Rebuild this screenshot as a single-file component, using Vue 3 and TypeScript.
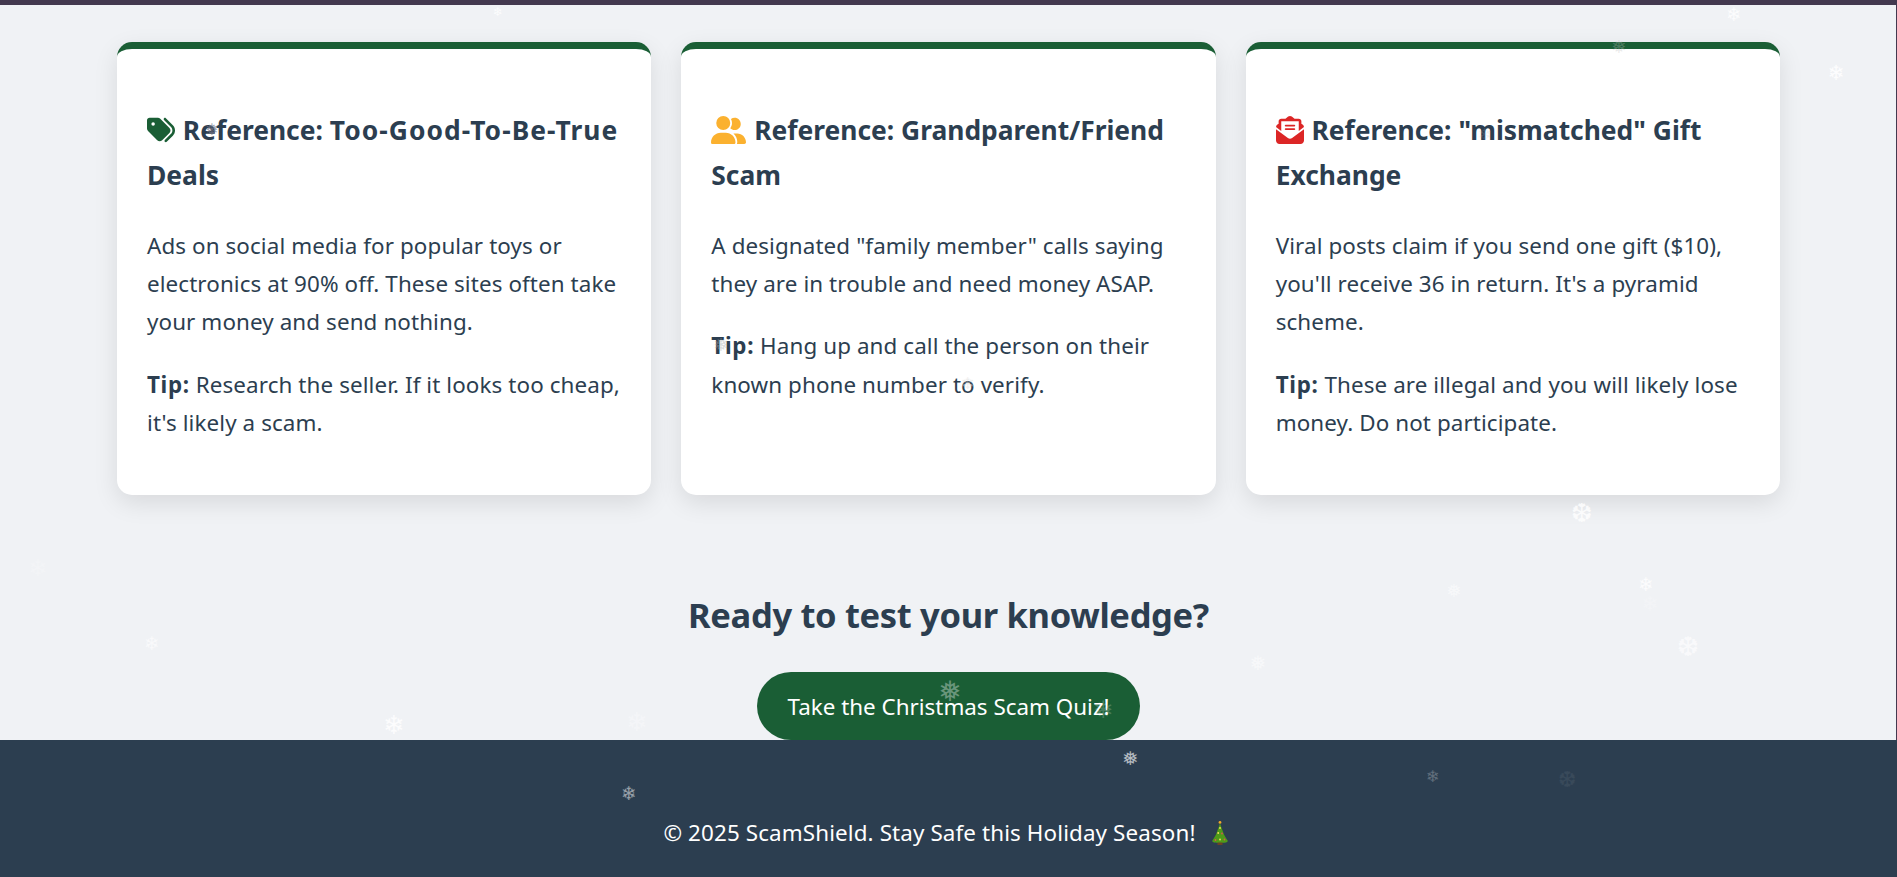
<script setup lang="ts">
interface Flake { g: string; x: number; y: number; s: number; o: number; c?: string }
const flakes: Flake[] = [
  { g: '❄', x: 498, y: 12, s: 12, o: .8 },
  { g: '❄', x: 1734, y: 14, s: 19, o: .8 },
  { g: '❄', x: 1836, y: 73, s: 21, o: .9 },
  { g: '❅', x: 1619, y: 47, s: 18, o: .3, c: '#bbb' },
  { g: '❅', x: 212, y: 130, s: 16, o: .7, c: '#778' },
  { g: '❅', x: 721, y: 345, s: 18, o: .4, c: '#aaa' },
  { g: '❄', x: 968, y: 384, s: 16, o: .5, c: '#ddd' },
  { g: '❄', x: 1485, y: 135, s: 16, o: .2, c: '#bbb' },
  { g: '❆', x: 1582, y: 513, s: 26, o: .8 },
  { g: '❅', x: 1454, y: 591, s: 18, o: .5 },
  { g: '❄', x: 1646, y: 584, s: 19, o: .8 },
  { g: '❄', x: 1650, y: 604, s: 21, o: .2 },
  { g: '❆', x: 1688, y: 646, s: 27, o: .6 },
  { g: '❄', x: 38, y: 568, s: 23, o: .2 },
  { g: '❄', x: 152, y: 643, s: 19, o: .6 },
  { g: '❄', x: 394, y: 725, s: 26, o: .8 },
  { g: '❄', x: 637, y: 722, s: 26, o: .3 },
  { g: '❅', x: 1258, y: 663, s: 20, o: .5 },
  { g: '❅', x: 950, y: 692, s: 28, o: .35 },
  { g: '❅', x: 1103, y: 710, s: 24, o: .2 },
  { g: '❅', x: 1130, y: 758, s: 19, o: .65 },
  { g: '❄', x: 629, y: 793, s: 19, o: .5 },
  { g: '❄', x: 1433, y: 777, s: 16, o: .25 },
  { g: '❆', x: 1567, y: 780, s: 22, o: .06 }
]
</script>

<template>
  <div class="page">
    <div class="topbar"></div>
    <main class="content">
      <section class="cards">
        <article class="card">
          <h3>
            <svg class="icon tag" viewBox="0 0 512 512"><path d="M345 39.1L472.8 168.4c52.4 53 52.4 138.2 0 191.2L360.8 472.9c-9.3 9.4-24.5 9.5-33.9 .2s-9.5-24.5-.2-33.9L438.6 325.9c33.9-34.3 33.9-89.4 0-123.7L310.9 72.9c-9.3-9.4-9.2-24.6 .2-33.9s24.6-9.2 33.9 .2zM0 229.5V80C0 53.5 21.5 32 48 32H197.5c17 0 33.3 6.7 45.3 18.7l168 168c25 25 25 65.5 0 90.5L277.3 442.7c-25 25-65.5 25-90.5 0l-168-168C6.7 262.7 0 246.5 0 229.5zM144 144a32 32 0 1 0 -64 0 32 32 0 1 0 64 0z"/></svg>
            Reference: <span class="wide">Too-Good-To-Be-True</span> Deals
          </h3>
          <p>Ads on social media for popular toys or electronics at 90% off. These sites often take your money and send nothing.</p>
          <p><strong>Tip:</strong> Research the seller. If it looks too cheap, it's likely a scam.</p>
        </article>
        <article class="card">
          <h3>
            <svg class="icon users" viewBox="0 0 640 512"><path d="M96 128a128 128 0 1 1 256 0A128 128 0 1 1 96 128zM0 482.3C0 383.8 79.8 304 178.3 304h91.4C368.2 304 448 383.8 448 482.3c0 16.4-13.3 29.7-29.7 29.7H29.7C13.3 512 0 498.7 0 482.3zM609.3 512H471.4c5.4-9.4 8.6-20.3 8.6-32v-8c0-60.7-27.1-115.2-69.8-151.8c2.4-.1 4.7-.2 7.1-.2h61.4C567.8 320 640 392.2 640 481.3c0 17-13.8 30.7-30.7 30.7zM432 256c-31 0-59-12.6-79.3-32.9C372.4 196.5 384 163.6 384 128c0-26.8-6.6-52.1-18.3-74.3C384.3 40.1 407.2 32 432 32c61.9 0 112 50.1 112 112s-50.1 112-112 112z"/></svg>
            Reference: Grandparent/Friend Scam
          </h3>
          <p>A designated "family member" calls saying they are in trouble and need money ASAP.</p>
          <p><strong>Tip:</strong> Hang up and call the person on their known phone number to verify.</p>
        </article>
        <article class="card">
          <h3>
            <svg class="icon mail" viewBox="0 0 512 512"><path d="M215.4 96H144 107.8 96v8.8V144v40.4 89L.2 202.5c1.6-18.1 10.9-34.9 25.7-45.8L48 140.3V96c0-26.5 21.5-48 48-48h76.6l49.9-36.9C232.2 3.9 243.9 0 256 0s23.8 3.9 33.5 11L339.4 48H416c26.5 0 48 21.5 48 48v44.3l22.1 16.4c14.8 10.9 24.1 27.7 25.7 45.8L416 273.4v-89V144 104.8 96H404.2 368 296.6 215.4zM0 448V242.1L217.6 403.3c11.1 8.2 24.6 12.7 38.4 12.7s27.3-4.4 38.4-12.7L512 242.1V448v0c0 35.3-28.7 64-64 64H64c-35.3 0-64-28.7-64-64v0zM176 160H336c8.8 0 16 7.2 16 16s-7.2 16-16 16H176c-8.8 0-16-7.2-16-16s7.2-16 16-16zm0 64H336c8.8 0 16 7.2 16 16s-7.2 16-16 16H176c-8.8 0-16-7.2-16-16s7.2-16 16-16z"/></svg>
            Reference: "mismatched" Gift Exchange
          </h3>
          <p>Viral posts claim if you send one gift ($10), you'll receive 36 in return. It's a pyramid scheme.</p>
          <p><strong>Tip:</strong> These are illegal and you will likely lose money. Do not participate.</p>
        </article>
      </section>
      <section class="cta">
        <h2>Ready to test your knowledge?</h2>
        <a class="btn">Take the Christmas Scam Quiz!</a>
      </section>
    </main>
    <footer class="footer">
      <span>© 2025 ScamShield. Stay Safe this Holiday Season!</span>
      <svg class="tree" viewBox="0 0 16 24">
        <circle cx="8" cy="1.4" r="1.4" fill="#f4a62a"/>
        <path d="M8 2 C9 6 10.5 9 11 11 C12.5 15 14 17 15.6 19.5 C16.4 21 14 22 8 22 C2 22 -.4 21 .4 19.5 C2 17 3.5 15 5 11 C5.5 9 7 6 8 2 Z" fill="#4f9a18"/>
        <rect x="5.5" y="21.5" width="5" height="2.5" fill="#6b4226"/>
        <circle cx="8" cy="7" r=".9" fill="#f6e05e"/>
        <circle cx="6.2" cy="12" r=".9" fill="#f6e05e"/>
        <circle cx="10" cy="12.5" r=".9" fill="#d9534f"/>
        <circle cx="8" cy="18.5" r=".9" fill="#f6e05e"/>
        <circle cx="3.5" cy="19" r=".9" fill="#d9534f"/>
        <circle cx="12.5" cy="18.5" r=".9" fill="#d9534f"/>
      </svg>
    </footer>
    <div class="snow" aria-hidden="true">
      <span
        v-for="(f, i) in flakes"
        :key="i"
        class="flake"
        :style="{ left: f.x + 'px', top: f.y + 'px', fontSize: f.s + 'px', opacity: f.o, color: f.c || '#fff' }"
      >{{ f.g }}</span>
    </div>
  </div>
</template>

<style>
html, body { margin: 0; padding: 0; overflow: hidden; }
</style>

<style scoped>
.page {
  position: relative;
  width: 1897px;
  height: 877px;
  overflow: hidden;
  background: #f0f2f5;
  color: #2c3e50;
  font-family: "Noto Sans", "Open Sans", sans-serif;
  display: flex;
  flex-direction: column;
}
.topbar { height: 5px; background: #43394f; flex: none; }
.content {
  flex: 1;
  min-height: 0;
  padding: 37px 117px 0;
  display: flex;
  flex-direction: column;
  box-shadow: inset -1px 0 0 #43394f;
}
.cards { display: grid; grid-template-columns: repeat(3, 1fr); gap: 30px; }
.card {
  background: #fff;
  border-top: 7px solid #1a5e35;
  border-radius: 15px;
  box-shadow: 0 8px 25px rgba(0,0,0,.1);
  padding: 59px 30px 29px;
  height: 453px;
  box-sizing: border-box;
}
h3 { margin: 0 0 29px; font-size: 26.4px; line-height: 45px; font-weight: 700; }
.wide { letter-spacing: 1.05px; }
.icon { height: 28px; width: auto; vertical-align: -4px; margin-right: 1px; }
.tag { fill: #1a5e35; }
.users { fill: #fbb12f; }
.mail { fill: #dc2626; }
p { margin: 0 0 24px; font-size: 22.4px; line-height: 38.2px; letter-spacing: .1px; }
strong { letter-spacing: .7px; }
.cta { text-align: center; margin-top: 90px; display: flex; flex-direction: column; align-items: center; }
h2 { margin: 0 0 27px; font-size: 34.5px; line-height: 60px; font-weight: 700; letter-spacing: -.33px; }
.btn {
  display: block;
  width: 383px;
  height: 68px;
  line-height: 69px;
  border-radius: 34px;
  background: #1a5e35;
  color: #fff;
  font-size: 22.4px;
}
.footer {
  flex: none;
  height: 137px;
  background: #2c3e50;
  color: #fff;
  font-size: 22.4px;
  letter-spacing: .12px;
  display: flex;
  justify-content: center;
  align-items: center;
  gap: 16px;
  padding: 48px 6px 0 0;
  box-sizing: border-box;
}
.tree { width: 16px; height: 24px; }
.snow { position: absolute; inset: 0; pointer-events: none; }
.flake { position: absolute; transform: translate(-50%, -50%); font-family: "DejaVu Sans", sans-serif; line-height: 1; }
</style>
